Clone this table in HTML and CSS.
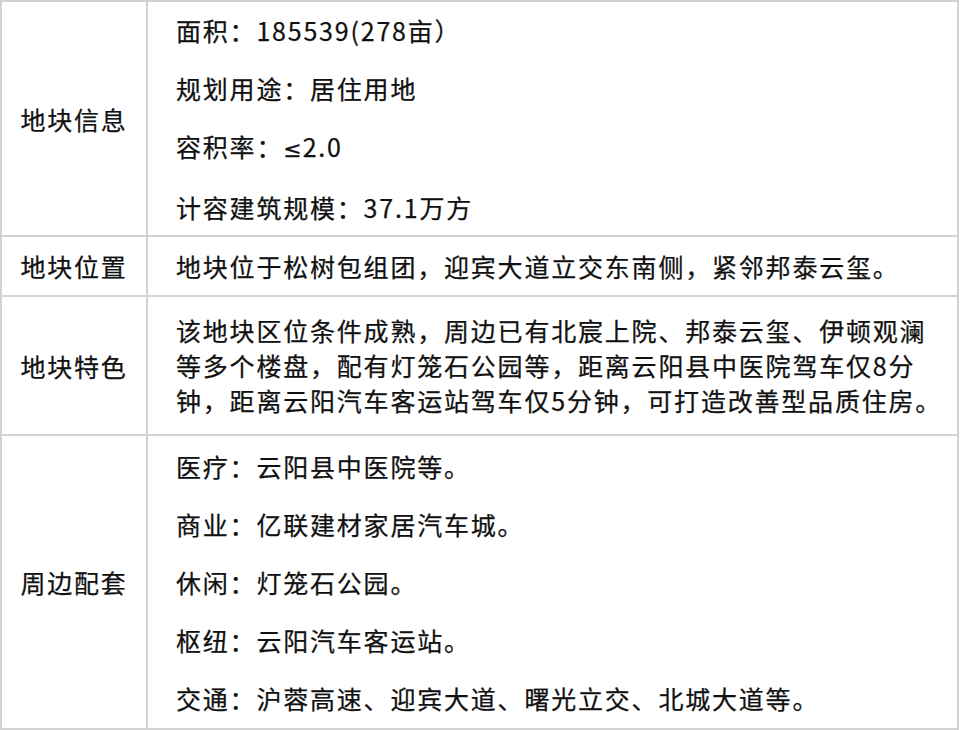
FILE: index.html
```html
<!DOCTYPE html>
<html lang="zh-CN">
<head>
<meta charset="utf-8">
<title>地块信息</title>
<link rel="stylesheet" href="styles.css">
</head>
<body>
<table class="info">
  <colgroup><col class="c-label"><col class="c-body"></colgroup>
  <tr class="r1">
    <th>地块信息</th>
    <td>
      <p>面积：185539(278亩）</p>
      <p>规划用途：居住用地</p>
      <p>容积率：<span class="sym">≤</span>2.0</p>
      <p>计容建筑规模：37.1万方</p>
    </td>
  </tr>
  <tr class="r2">
    <th>地块位置</th>
    <td><p>地块位于松树包组团，迎宾大道立交东南侧，紧邻邦泰云玺。</p></td>
  </tr>
  <tr class="r3">
    <th>地块特色</th>
    <td><p>该地块区位条件成熟，周边已有北宸上院、邦泰云玺、伊顿观澜等多个楼盘，配有灯笼石公园等，距离云阳县中医院驾车仅8分钟，距离云阳汽车客运站驾车仅5分钟，可打造改善型品质住房。</p></td>
  </tr>
  <tr class="r4">
    <th>周边配套</th>
    <td>
      <p>医疗：云阳县中医院等。</p>
      <p>商业：亿联建材家居汽车城。</p>
      <p>休闲：灯笼石公园。</p>
      <p>枢纽：云阳汽车客运站。</p>
      <p>交通：沪蓉高速、迎宾大道、曙光立交、北城大道等。</p>
    </td>
  </tr>
</table>
</body>
</html>
```

FILE: styles.css
```css
html, body {
  margin: 0;
  padding: 0;
  background: #ffffff;
}

body {
  font-family: "Noto Sans CJK SC", "Noto Sans", sans-serif;
  color: #111111;
  font-size: 25px;
  letter-spacing: 1.8px;
}

.info {
  border-collapse: collapse;
  width: 959px;
  table-layout: fixed;
  border-top: 1px solid #8f8f8f;
  border-left: 1px solid #8f8f8f;
  border-right: 2px solid #b3b3b3;
  border-bottom: 2px solid #b3b3b3;
}

.c-label { width: 146px; }

.info th,
.info td {
  border: 2px solid #d2d2d2;
  vertical-align: middle;
  padding: 0;
}

.info th {
  font-weight: normal;
  text-align: center;
  -webkit-text-stroke: 0.25px #111111;
}

.info td {
  padding-left: 28px;
  padding-right: 8px;
}

.info p {
  margin: 0;
  line-height: 35px;
  -webkit-text-stroke: 0.25px #111111;
}

.info p + p {
  margin-top: 23px;
}

.sym {
  font-family: "DejaVu Sans", sans-serif;
  font-size: 22px;
  letter-spacing: 1px;
}

.r1 { height: 235px; }
.r2 { height: 60px; }
.r3 { height: 139px; }
.r4 { height: 294px; }
```
